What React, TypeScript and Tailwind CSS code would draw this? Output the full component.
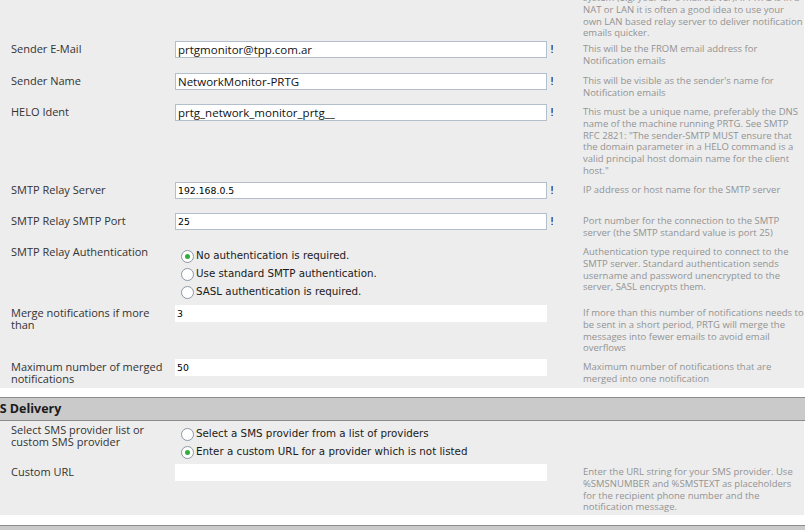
import React from "react";

const LABEL = "font-['Open_Sans',sans-serif] text-[11px] leading-[12px] text-[#333333]";
const HELP = "font-['Open_Sans',sans-serif] text-[9.5px] leading-[11.8px] text-[#939393] whitespace-nowrap";

function Help({ lines }: { lines: string[] }) {
  return (
    <div className={`pt-[2px] ${HELP}`}>
      {lines.map((l, i) => (
        <div key={i}>{l}</div>
      ))}
    </div>
  );
}

function TextInput({ value, bordered, mono }: { value: string; bordered?: boolean; mono?: boolean }) {
  return (
    <div
      className={`h-[17px] w-[372px] bg-white flex items-center px-[2px] overflow-hidden ${
        bordered ? "border border-[#b3bfcb]" : ""
      } ${
        mono
          ? "font-['DejaVu_Sans',sans-serif] text-[9.3px] text-black"
          : "font-['Open_Sans',sans-serif] text-[11.5px] text-[#111111]"
      }`}
    >
      {value}
    </div>
  );
}

function Radio({ checked, label }: { checked?: boolean; label: string }) {
  return (
    <div className="flex items-center h-[18px]">
      <span className="w-[13px] h-[13px] rounded-full border border-[#8b97a3] bg-white flex items-center justify-center mr-[2px]">
        {checked && <span className="w-[5px] h-[5px] rounded-full bg-[#2fae3a]" />}
      </span>
      <span className="font-['DejaVu_Sans',sans-serif] text-[10.3px] text-[#1a1a1a]">{label}</span>
    </div>
  );
}

function Row({
  h,
  label,
  control,
  bang,
  help,
}: {
  h: string;
  label?: React.ReactNode;
  control?: React.ReactNode;
  bang?: boolean;
  help?: string[];
}) {
  return (
    <div className={`grid grid-cols-[175px_372px_36px_1fr] ${h}`}>
      <div className={`pl-[11px] pt-[2px] ${LABEL}`}>{label}</div>
      <div>{control}</div>
      <div className="pl-[3px] font-['DejaVu_Sans',sans-serif] text-[10px] leading-[17px] text-black">
        {bang ? "!" : ""}
      </div>
      <div>{help && <Help lines={help} />}</div>
    </div>
  );
}

export default function App() {
  return (
    <div className="w-[807px] h-[530px] overflow-hidden bg-white">
      <div className="w-[804px] bg-[#ededed]">
        <div className="h-[41px] overflow-hidden grid grid-cols-[583px_1fr]">
          <div />
          <div className="-mt-[10px]">
            <Help
              lines={[
                "system (e.g. your ISP's mail server). If PRTG is in a",
                "NAT or LAN it is often a good idea to use your",
                "own LAN based relay server to deliver notification",
                "emails quicker.",
              ]}
            />
          </div>
        </div>
        <Row
          h="h-[32px]"
          label="Sender E-Mail"
          control={<TextInput value="prtgmonitor@tpp.com.ar" bordered />}
          bang
          help={["This will be the FROM email address for", "Notification emails"]}
        />
        <Row
          h="h-[31px]"
          label="Sender Name"
          control={<TextInput value="NetworkMonitor-PRTG" bordered />}
          bang
          help={["This will be visible as the sender's name for", "Notification emails"]}
        />
        <Row
          h="h-[78px]"
          label="HELO Ident"
          control={<TextInput value="prtg_network_monitor_prtg__" bordered />}
          bang
          help={[
            "This must be a unique name, preferably the DNS",
            "name of the machine running PRTG. See SMTP",
            "RFC 2821: \"The sender-SMTP MUST ensure that",
            "the domain parameter in a HELO command is a",
            "valid principal host domain name for the client",
            "host.\"",
          ]}
        />
        <Row
          h="h-[31px]"
          label="SMTP Relay Server"
          control={<TextInput value="192.168.0.5" bordered mono />}
          bang
          help={["IP address or host name for the SMTP server"]}
        />
        <Row
          h="h-[31px]"
          label="SMTP Relay SMTP Port"
          control={<TextInput value="25" bordered mono />}
          bang
          help={["Port number for the connection to the SMTP", "server (the SMTP standard value is port 25)"]}
        />
        <Row
          h="h-[61px]"
          label="SMTP Relay Authentication"
          control={
            <div className="pl-[6px] pt-[3px]">
              <Radio checked label="No authentication is required." />
              <Radio label="Use standard SMTP authentication." />
              <Radio label="SASL authentication is required." />
            </div>
          }
          help={[
            "Authentication type required to connect to the",
            "SMTP server. Standard authentication sends",
            "username and password unencrypted to the",
            "server, SASL encrypts them.",
          ]}
        />
        <Row
          h="h-[54px]"
          label={
            <>
              Merge notifications if more
              <br />
              than
            </>
          }
          control={<TextInput value="3" mono />}
          help={[
            "If more than this number of notifications needs to",
            "be sent in a short period, PRTG will merge the",
            "messages into fewer emails to avoid email",
            "overflows",
          ]}
        />
        <Row
          h="h-[29px]"
          label={
            <>
              Maximum number of merged
              <br />
              notifications
            </>
          }
          control={<TextInput value="50" mono />}
          help={["Maximum number of notifications that are", "merged into one notification"]}
        />
      </div>
      <div className="h-[9px]" />
      <div className="w-[805px] h-[24px] border-y border-[#8c8c8c] bg-[#cacaca] flex items-center overflow-hidden">
        <span className="-ml-[19px] font-['Open_Sans',sans-serif] font-bold text-[12.5px] text-[#1a1a1a] whitespace-nowrap">
          SMS Delivery
        </span>
      </div>
      <div className="w-[804px] bg-[#ededed] pt-[1px]">
        <Row
          h="h-[42px]"
          label={
            <>
              Select SMS provider list or
              <br />
              custom SMS provider
            </>
          }
          control={
            <div className="pl-[6px] pt-[3px] w-[420px]">
              <Radio label="Select a SMS provider from a list of providers" />
              <Radio checked label="Enter a custom URL for a provider which is not listed" />
            </div>
          }
        />
        <Row
          h="h-[51px]"
          label="Custom URL"
          control={<TextInput value="" />}
          help={[
            "Enter the URL string for your SMS provider. Use",
            "%SMSNUMBER and %SMSTEXT as placeholders",
            "for the recipient phone number and the",
            "notification message.",
          ]}
        />
      </div>
      <div className="h-[10px]" />
      <div className="w-[805px] h-[10px] border-t border-[#8c8c8c] bg-[#cacaca]" />
    </div>
  );
}
